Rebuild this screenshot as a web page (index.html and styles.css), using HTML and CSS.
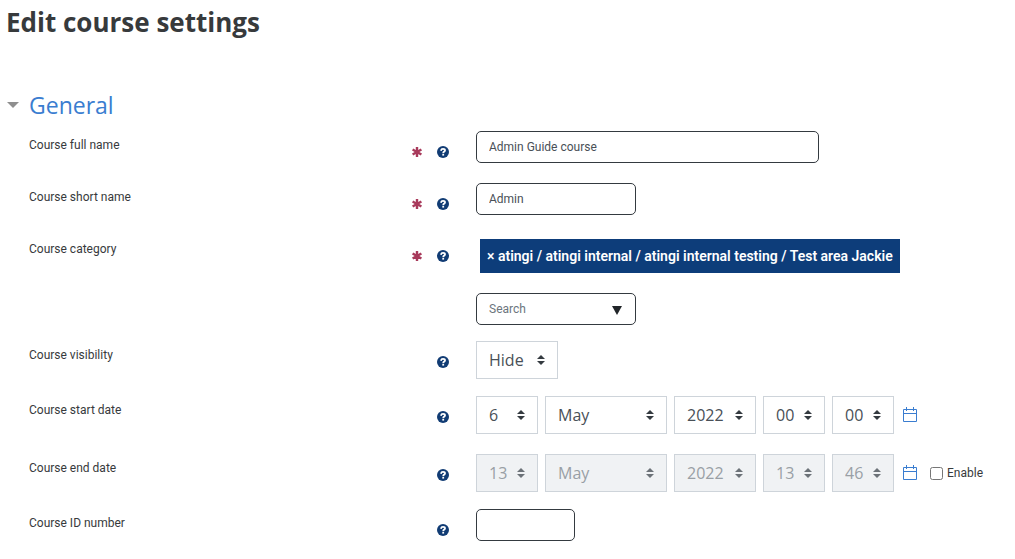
FILE: index.html
```html
<!DOCTYPE html>
<html lang="en">
<head>
<meta charset="utf-8">
<meta name="viewport" content="width=device-width, initial-scale=1">
<title>Edit course settings</title>
<link rel="stylesheet" href="styles.css">
</head>
<body>
<svg class="sprite" aria-hidden="true">
  <symbol id="required" viewBox="0 0 12 12"><path d="M6 1v10M1.600 3.500l8.800 5M1.600 8.500l8.800-5" fill="none" stroke="currentColor" stroke-width="2.400"/></symbol>
  <symbol id="help" viewBox="0 0 12 12"><circle cx="6" cy="6" r="6" fill="currentColor"/><path d="M3.900 4.700C4.200 3.400 5 2.900 6 2.900c1.200 0 2 .6 2 1.500C8 5.600 6.200 5.600 6.200 7.200" fill="none" stroke="#fff" stroke-width="1.800"/><path d="M5.300 8h1.800v1.600H5.300z" fill="#fff"/></symbol>
  <symbol id="calendar" viewBox="0 0 16 16"><path d="M1.500 2.500h13v12h-13zM1.500 6.500h13M4.500 0v4M11.500 0v4" fill="none" stroke="currentColor"/></symbol>
</svg>
<main class="page">
  <h1 class="title">Edit course settings</h1>
  <form class="form">
    <h2 class="section"><button class="toggle" type="button" aria-expanded="true"><span class="arrow"></span>General</button></h2>

    <div class="row">
      <label class="label" for="fullname">Course full name</label>
      <div class="marks"><svg class="required"><use href="#required"/></svg><button class="help" type="button" aria-label="Help with course full name"><svg class="icon"><use href="#help"/></svg></button></div>
      <div class="control"><input class="text long" id="fullname" type="text" value="Admin Guide course"></div>
    </div>
    <div class="row">
      <label class="label" for="shortname">Course short name</label>
      <div class="marks"><svg class="required"><use href="#required"/></svg><button class="help" type="button" aria-label="Help with course short name"><svg class="icon"><use href="#help"/></svg></button></div>
      <div class="control"><input class="text" id="shortname" type="text" value="Admin"></div>
    </div>
    <div class="row category">
      <label class="label" for="category">Course category</label>
      <div class="marks"><svg class="required"><use href="#required"/></svg><button class="help" type="button" aria-label="Help with course category"><svg class="icon"><use href="#help"/></svg></button></div>
      <div class="control stacked">
        <button class="tag" type="button">× atingi / atingi internal / atingi internal testing / Test area Jackie</button>
        <div class="search"><input class="text" id="category" type="text" placeholder="Search"><span class="drop"></span></div>
      </div>
    </div>
    <div class="row choice">
      <label class="label" for="visible">Course visibility</label>
      <div class="marks"><button class="help" type="button" aria-label="Help with course visibility"><svg class="icon"><use href="#help"/></svg></button></div>
      <div class="control"><select class="select visibility" id="visible"><option>Hide</option><option>Show</option></select></div>
    </div>
    <div class="row">
      <label class="label" for="startday">Course start date</label>
      <div class="marks"><button class="help" type="button" aria-label="Help with course start date"><svg class="icon"><use href="#help"/></svg></button></div>
      <div class="control">
        <select class="select" id="startday"><option>6</option></select>
        <select class="select month" aria-label="Start month"><option>May</option></select>
        <select class="select year" aria-label="Start year"><option>2022</option></select>
        <select class="select" aria-label="Start hour"><option>00</option></select>
        <select class="select" aria-label="Start minute"><option>00</option></select>
        <button class="calendar" type="button" aria-label="Start date calendar"><svg class="date-icon"><use href="#calendar"/></svg></button>
      </div>
    </div>
    <div class="row choice">
      <label class="label" for="endday">Course end date</label>
      <div class="marks"><button class="help" type="button" aria-label="Help with course end date"><svg class="icon"><use href="#help"/></svg></button></div>
      <div class="control">
        <select class="select" id="endday" disabled><option>13</option></select>
        <select class="select month" aria-label="End month" disabled><option>May</option></select>
        <select class="select year" aria-label="End year" disabled><option>2022</option></select>
        <select class="select" aria-label="End hour" disabled><option>13</option></select>
        <select class="select" aria-label="End minute" disabled><option>46</option></select>
        <button class="calendar" type="button" aria-label="End date calendar"><svg class="date-icon"><use href="#calendar"/></svg></button>
        <label class="enable"><input class="check" type="checkbox">Enable</label>
      </div>
    </div>
    <div class="row">
      <label class="label" for="idnumber">Course ID number</label>
      <div class="marks"><button class="help" type="button" aria-label="Help with course ID number"><svg class="icon"><use href="#help"/></svg></button></div>
      <div class="control"><input class="text short" id="idnumber" type="text"></div>
    </div>
  </form>
</main>
</body>
</html>
```
FILE: styles.css
```css
* { box-sizing: border-box; }

body {
  margin: 0;
  background: #fff;
  color: #373a3c;
  font: 12px/16px Roboto, "Noto Sans", sans-serif;
}

button, input, select { font: inherit; color: inherit; }
button { padding: 0; border: 0; background: none; cursor: pointer; }

.sprite { position: absolute; width: 0; height: 0; }
.page { padding: 4px 6px 0; }

.title {
  margin: 0 0 49px;
  font: 700 26px/36px "Open Sans", sans-serif;
}

.section { margin: 0 0 10px; font: 400 23px/32px "Open Sans", sans-serif; }
.toggle { display: flex; align-items: center; color: #3a7dd0; }
.arrow {
  width: 12px;
  height: 6px;
  margin: 0 10px 0 1px;
  background: #8f8f8f;
  clip-path: polygon(0 0, 100% 0, 50% 100%);
}

.row {
  display: grid;
  grid-template-columns: minmax(120px, 382fr) 38px minmax(0, 560fr);
  padding-left: 23px;
  margin-bottom: 20px;
}
.category { margin-bottom: 16px; }
.choice { margin-bottom: 17px; }

.label { padding-top: 6px; }
.marks { display: flex; justify-content: flex-end; align-items: flex-start; gap: 14px; padding-top: 15px; }
.required { width: 12px; height: 12px; color: #a83a5b; }
.help, .icon { display: block; width: 12px; height: 12px; color: #113c74; }

.control { display: flex; align-items: center; gap: 7px; padding-left: 27px; }
.stacked { flex-direction: column; align-items: flex-start; gap: 20px; }

.text {
  width: 160px;
  height: 32px;
  padding: 0 12px;
  border: 1px solid #343a40;
  border-radius: 5px;
  background: #fff;
  color: #495057;
}
.text::placeholder { color: #6c757d; opacity: 1; }
.long { width: 343px; }
.short { width: 99px; }

.tag {
  margin: 4px 0 0 4px;
  padding: 8px 7px;
  background: #0d3d7a;
  color: #fff;
  font-size: 14px;
  line-height: 18px;
  font-weight: 600;
  white-space: nowrap;
}
.search { position: relative; }
.drop {
  position: absolute;
  right: 14px;
  top: 13px;
  width: 10px;
  height: 9px;
  background: #212529;
  clip-path: polygon(0 0, 100% 0, 50% 100%);
}

.select {
  appearance: none;
  width: 62px;
  height: 38px;
  padding: 0 24px 0 12px;
  border: 1px solid #ced4da;
  border-radius: 0;
  background: #fff url("data:image/svg+xml,%3Csvg xmlns='http://www.w3.org/2000/svg' viewBox='0 0 8 10'%3E%3Cpath fill='%23343a40' d='M0 4l4-4 4 4zM0 6h8l-4 4z'/%3E%3C/svg%3E") no-repeat right 12px center / 8px 10px;
  color: #495057;
  font: 16px/24px "Open Sans", sans-serif;
}
.select:disabled {
  background-color: #f0f2f4;
  background-image: url("data:image/svg+xml,%3Csvg xmlns='http://www.w3.org/2000/svg' viewBox='0 0 8 10'%3E%3Cpath fill='%236c7278' d='M0 4l4-4 4 4zM0 6h8l-4 4z'/%3E%3C/svg%3E");
  color: #999fa5;
  opacity: 1;
}
.month { width: 122px; }
.year { width: 82px; }
.visibility { width: 82px; }

.calendar { margin-left: 1px; color: #3a7dd0; }
.date-icon { display: block; width: 16px; height: 16px; }
.enable { display: flex; align-items: center; gap: 4px; margin-left: 5px; }
.check { width: 13px; height: 13px; margin: 0; }
```
